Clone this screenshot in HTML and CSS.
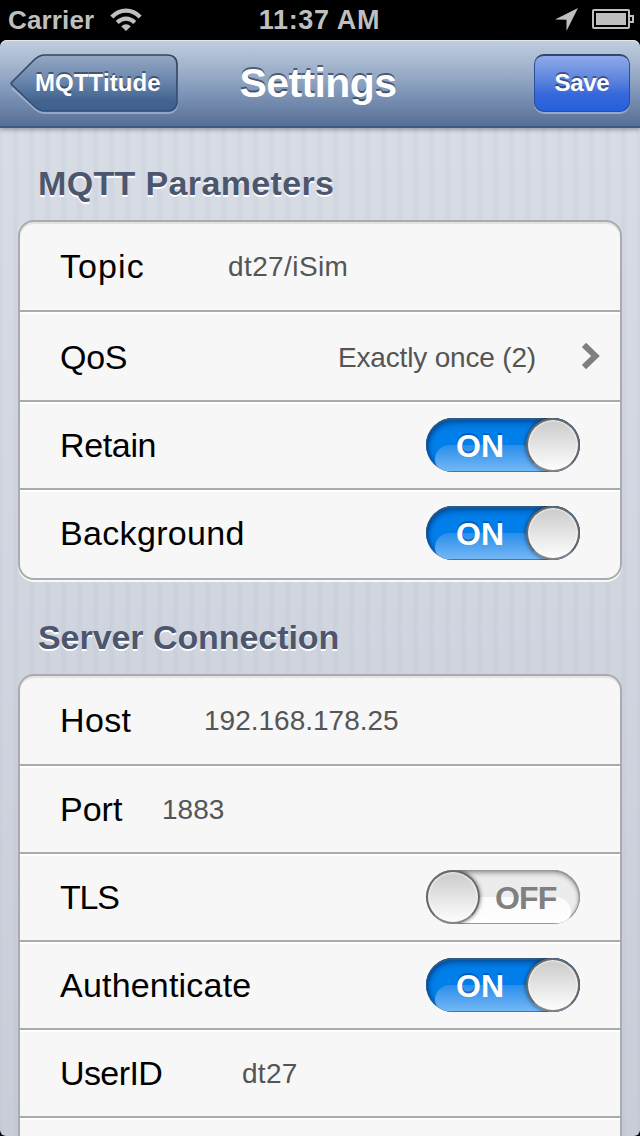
FILE: index.html
```html
<!DOCTYPE html>
<html lang="en">
<head>
<meta charset="utf-8">
<title>Settings</title>
<link rel="stylesheet" href="styles.css">
</head>
<body>
<div class="screen">
  <header class="status">
    <div class="status-left">
      <span class="carrier">Carrier</span>
      <svg class="wifi" width="32" height="24" viewBox="0 0 32 24" fill="none" stroke="#bfbfbf" stroke-width="4.200">
        <path d="M1.800 9C10 0.600 22 0.600 30.200 9"/>
        <path d="M7.200 14.600C12.500 9.400 19.500 9.400 24.800 14.600"/>
        <path d="M16 23L11.300 18.500C14 15.500 18 15.500 20.700 18.500Z" fill="#bfbfbf" stroke="none"/>
      </svg>
    </div>
    <span class="clock">11:37 AM</span>
    <div class="status-right">
      <svg width="23" height="23" viewBox="0 0 23 23"><path d="M23 0L11.500 23V11.800L0 11.500Z" fill="#bfbfbf"/></svg>
      <svg width="42" height="20" viewBox="0 0 42 20"><rect x="1" y="1" width="36" height="18" rx="1" fill="none" stroke="#bfbfbf" stroke-width="2"/><rect x="4" y="4" width="30" height="12" fill="#bfbfbf"/><path d="M38 7H41V13H38" fill="none" stroke="#bfbfbf" stroke-width="2"/></svg>
    </div>
  </header>
  <nav class="navbar">
    <button class="back">
      <svg class="back-shape" width="170" height="62" viewBox="0 0 170 62">
        <defs><linearGradient id="backFill" x1="0" y1="0" x2="0" y2="1"><stop offset="0" stop-color="#95a8c4"/><stop offset=".5" stop-color="#6682aa"/><stop offset=".8" stop-color="#44658f"/><stop offset="1" stop-color="#3f5f8e"/></linearGradient>
        <linearGradient id="backEdge" x1="0" y1="0" x2="0" y2="1"><stop offset="0" stop-color="#38445a"/><stop offset="1" stop-color="#30517f"/></linearGradient></defs>
        <path d="M35 3H157Q167 3 167 13V49Q167 59 157 59H35Q29 59 24 54L2 34" fill="none" stroke="#b4c3d7" stroke-opacity=".6" stroke-width="2"/>
        <path d="M35 1H157Q167 1 167 11V47Q167 57 157 57H35Q29 57 24 52L2 31Q0.500 29.500 2 28L24 6Q29 1 35 1Z" fill="url(#backFill)" stroke="url(#backEdge)" stroke-width="1.700"/>
      </svg>
      <span class="back-text">MQTTitude</span>
    </button>
    <h1 class="title">Settings</h1>
    <button class="save"><span class="save-text">Save</span></button>
  </nav>
  <main class="content">
    <h2 class="heading heading-mqtt">MQTT Parameters</h2>
    <section class="card">
      <div class="row tall"><span class="label topic">Topic</span><span class="value v-topic">dt27/iSim</span></div>
      <div class="row tall"><span class="label qos">QoS</span><span class="value v-qos">Exactly once (2)</span>
        <svg class="chevron" width="18" height="28" viewBox="0 0 18 28"><path d="M2 3L13.500 14L2 25" fill="none" stroke="#7f7f7f" stroke-width="6"/></svg></div>
      <div class="row"><span class="label retain">Retain</span><div class="switch on"><span class="gloss"></span><span class="switch-text">ON</span><span class="knob"></span></div></div>
      <div class="row last"><span class="label background">Background</span><div class="switch on"><span class="gloss"></span><span class="switch-text">ON</span><span class="knob"></span></div></div>
    </section>
    <h2 class="heading heading-server">Server Connection</h2>
    <section class="card">
      <div class="row tall"><span class="label host">Host</span><span class="value v-host">192.168.178.25</span></div>
      <div class="row"><span class="label port">Port</span><span class="value v-port">1883</span></div>
      <div class="row"><span class="label tls">TLS</span><div class="switch off"><span class="gloss"></span><span class="switch-text">OFF</span><span class="knob"></span></div></div>
      <div class="row"><span class="label auth">Authenticate</span><div class="switch on"><span class="gloss"></span><span class="switch-text">ON</span><span class="knob"></span></div></div>
      <div class="row"><span class="label user">UserID</span><span class="value v-user">dt27</span></div>
      <div class="row"></div>
    </section>
  </main>
</div>
</body>
</html>
```
FILE: styles.css
```css
* { box-sizing: border-box; }
body { margin: 0; background: #000; font-family: "Liberation Sans", Arial, sans-serif; }
.screen { width: 640px; height: 1136px; overflow: hidden; display: flex; flex-direction: column; background: #000; }
.status { height: 40px; flex: none; display: grid; grid-template-columns: 1fr auto 1fr; align-items: center; padding: 0 8px; color: #bfbfbf; font-size: 26px; font-weight: bold; line-height: 40px; }
.status-left { display: flex; align-items: center; gap: 16px; }
.carrier { letter-spacing: .15px; }
.clock { font-size: 27px; letter-spacing: .65px; margin-right: 1px; }
.status-right { display: flex; align-items: center; justify-content: flex-end; gap: 14px; padding-bottom: 2px; margin-right: -2px; }
.navbar { height: 88px; flex: none; display: grid; grid-template-columns: 228px 1fr 232px; align-items: start; padding: 14px 10px 0; border-radius: 7px 7px 0 0; border-bottom: 2px solid #3c5a86; background: linear-gradient(#c0cedf, #a8b9d0 25%, #8197b8 60%, #566f97); box-shadow: inset 0 1px #e2e9f1, 0 2px 4px rgba(0,0,0,.3); position: relative; }
button { border: 0; padding: 0; background: none; font: bold 24px/58px "Liberation Sans", Arial, sans-serif; color: #fff; text-shadow: 0 -2px rgba(20,35,60,.55); }
.back { display: grid; width: 170px; height: 62px; text-align: left; }
.back-shape, .back-text { grid-area: 1 / 1; }
.back-text { padding-left: 25px; letter-spacing: .1px; }
.title { margin: 0; font-size: 41px; letter-spacing: -.6px; line-height: 59px; color: #fff; text-align: center; text-shadow: 0 -2px rgba(20,35,60,.6); white-space: nowrap; }
.save { justify-self: end; width: 96px; height: 58px; border: 1px solid #2b4f9b; border-top: 2px solid #34456f; border-radius: 10px; background: linear-gradient(#8ea9e8, #5b83dd 45%, #3668db 70%, #2560dc); box-shadow: 0 2px rgba(190,205,225,.55); line-height: 52px; letter-spacing: -.3px; padding-bottom: 2px; }
.content { flex: 1; min-height: 0; overflow: hidden; display: flex; flex-direction: column; padding: 0 18px; background: repeating-linear-gradient(90deg, rgba(160,175,208,.11) 0 2px, transparent 2px 13px, rgba(160,175,208,.11) 13px 16px), linear-gradient(#d8dce5, #c9cdd7); border-radius: 0 0 6px 6px; }
.heading { margin: 0; padding: 0 20px; font-size: 34px; line-height: 40px; color: #4c566c; text-shadow: 0 2px #fff; white-space: nowrap; }
.heading-mqtt { margin: 35px 0 17px; letter-spacing: .36px; }
.heading-server { margin: 37px 0 17px; letter-spacing: -.06px; }
.card { border: 2px solid #a9abac; border-radius: 16px; background: #f7f7f7; box-shadow: 0 2px rgba(255,255,255,.85), inset 0 2px #e3e3e3; overflow: hidden; flex: none; }
.row { height: 88px; display: flex; align-items: center; padding: 0 40px; border-bottom: 2px solid #a9abac; }
.row + .row { box-shadow: inset 0 2px #fff; }
.tall { height: 90px; }
.last { border: 0; padding-bottom: 2px; }
.label { font-size: 34px; color: #000; white-space: nowrap; }
.topic { width: 168px; letter-spacing: 1.1px; }
.qos { letter-spacing: -.3px; padding-top: 2px; }
.retain { letter-spacing: -.35px; }
.background { letter-spacing: .33px; }
.host { width: 144px; letter-spacing: .35px; }
.port { width: 102px; }
.tls { letter-spacing: -1.2px; }
.auth { letter-spacing: .2px; }
.user { width: 182px; letter-spacing: -.6px; }
.value { font-size: 28px; color: #555; white-space: nowrap; padding-top: 2px; }
.v-topic { letter-spacing: .4px; }
.v-qos { margin-left: auto; letter-spacing: -.17px; padding-top: 3px; }
.v-user { letter-spacing: .3px; }
.chevron { margin: 0 -20px 0 46px; flex: none; }
.switch { margin-left: auto; width: 154px; height: 54px; border-radius: 27px; display: grid; grid-template-columns: 100px 54px; grid-template-rows: 54px; align-items: center; overflow: hidden; position: relative; flex: none; }
.on { background: #007fea; box-shadow: inset 0 2px 1px #315b85, inset 0 4px 7px rgba(0,30,90,.6), inset 2px 0 4px rgba(0,50,110,.5), inset 0 -1px 1px #7790aa; }
.off { grid-template-columns: 54px 100px; background: #ececec; box-shadow: inset 0 0 0 1px #999, inset 0 3px 5px rgba(0,0,0,.35), inset -1px 0 3px rgba(0,0,0,.3); }
.gloss { position: absolute; left: 9px; right: 9px; top: 27px; bottom: 1px; }
.on .gloss { right: 27px; border-radius: 16px 0 0 12px; background: linear-gradient(#2a8eeb, #74b7f5); }
.off .gloss { left: 27px; border-radius: 0 16px 12px 0; background: linear-gradient(#fafafa, #fff); }
.switch-text { grid-row: 1; position: relative; font-size: 32px; font-weight: bold; line-height: 52px; padding-top: 2px; white-space: nowrap; }
.on .switch-text { grid-column: 1; padding-left: 30px; color: #fff; text-shadow: 0 -2px rgba(0,60,130,.5); }
.off .switch-text { grid-column: 2; padding-left: 15px; letter-spacing: -.9px; color: #808080; }
.knob { grid-row: 1; position: relative; width: 54px; height: 54px; border: 2px solid #686868; border-bottom-color: #858585; border-radius: 50%; background: linear-gradient(#cbcbcb, #fdfdfd); box-shadow: inset 0 0 2px 1px rgba(255,255,255,.75), 0 0 4px rgba(0,0,0,.6); }
.on .knob { grid-column: 2; }
.off .knob { grid-column: 1; }
```
